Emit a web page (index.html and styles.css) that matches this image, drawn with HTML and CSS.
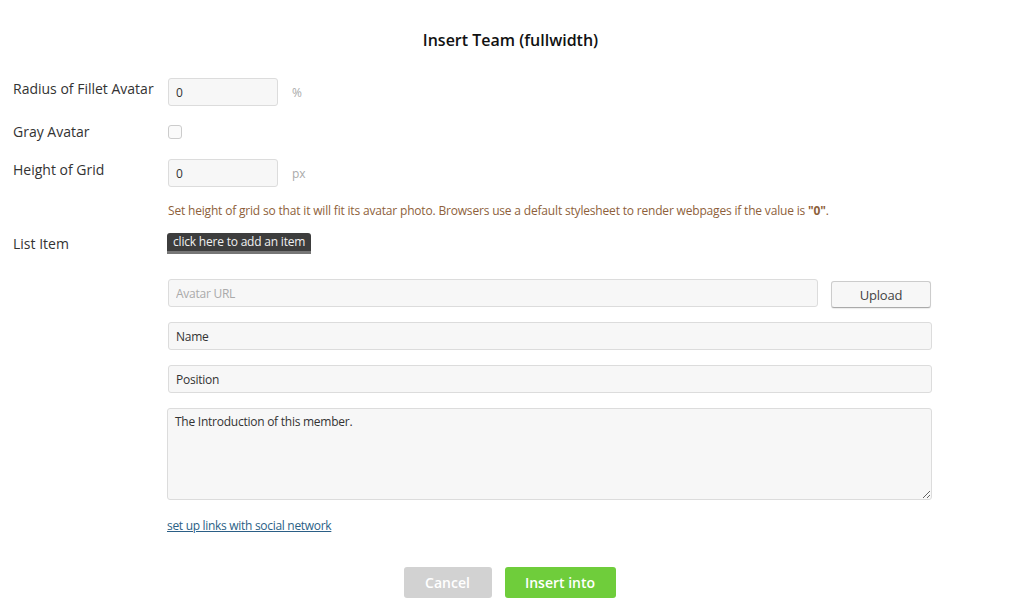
FILE: index.html
```html
<!DOCTYPE html>
<html>
<head>
<meta charset="utf-8">
<link rel="stylesheet" href="styles.css">
</head>
<body>
<div class="dialog">
  <h1 class="title">Insert Team (fullwidth)</h1>
  <div class="form">
    <div class="row row-radius">
      <label class="label">Radius of Fillet Avatar</label>
      <div class="field">
        <div class="inline">
          <input class="input small" type="text" value="0">
          <span class="unit">%</span>
        </div>
      </div>
    </div>
    <div class="row row-gray">
      <label class="label">Gray Avatar</label>
      <div class="field">
        <span class="checkbox"></span>
      </div>
    </div>
    <div class="row row-height">
      <label class="label">Height of Grid</label>
      <div class="field">
        <div class="inline">
          <input class="input small" type="text" value="0">
          <span class="unit">px</span>
        </div>
        <p class="help">Set height of grid so that it will fit its avatar photo. Browsers use a default stylesheet to render webpages if the value is <b>"0"</b>.</p>
      </div>
    </div>
    <div class="row row-list">
      <label class="label">List Item</label>
      <div class="field">
        <button class="add-btn" type="button">click here to add an item</button>
        <div class="item">
          <div class="url-row">
            <input class="input wide" type="text" placeholder="Avatar URL">
            <button class="upload" type="button">Upload</button>
          </div>
          <input class="input full" type="text" value="Name">
          <input class="input full" type="text" value="Position">
          <textarea class="textarea">The Introduction of this member.</textarea>
          <a class="social" href="#">set up links with social network</a>
        </div>
      </div>
    </div>
  </div>
  <div class="actions">
    <button class="btn cancel" type="button">Cancel</button>
    <button class="btn insert" type="button">Insert into</button>
  </div>
</div>
</body>
</html>
```
FILE: styles.css
```css
* { box-sizing: border-box; }
html, body { margin: 0; padding: 0; background: #fff; }
body {
  font-family: "Open Sans", "Liberation Sans", sans-serif;
  color: #333;
  width: 1012px;
  height: 607px;
  overflow: hidden;
}
.dialog { padding: 29px 13px 0 13px; }
.title {
  margin: 0;
  padding-left: 9px;
  text-align: center;
  font-size: 16px;
  font-weight: 600;
  color: #111;
  line-height: 22px;
}
.form { margin-top: 27px; }
.row {
  display: grid;
  grid-template-columns: 154px 1fr;
}
.label {
  font-size: 14px;
  line-height: 20px;
  color: #333;
  padding-top: 1px;
}
.inline { display: flex; align-items: center; }
.input {
  display: block;
  height: 28px;
  border: 1px solid #dcdcdc;
  border-radius: 3px;
  background: #f7f7f7;
  font-family: "Open Sans", "Liberation Sans", sans-serif;
  font-size: 12px;
  letter-spacing: -0.25px;
  color: #333;
  padding: 0 7px;
  outline: none;
}
.input::placeholder { color: #aaa; }
.small { width: 110px; margin-left: 1px; }
.unit { font-size: 12px; color: #aaa; margin-left: 14px; }
.row-gray { margin-top: 15px; }
.checkbox {
  display: block;
  width: 14px;
  height: 14px;
  border: 1px solid #ccc;
  border-radius: 3px;
  background: #fafafa;
  margin: 4px 0 0 1px;
}
.row-height { margin-top: 17px; }
.help {
  margin: 16px 0 0 1px;
  font-size: 12px;
  letter-spacing: -0.18px;
  line-height: 16px;
  color: #8e5f3b;
}
.help b { font-weight: 700; }
.row-list { margin-top: 14px; }
.row-list .label { padding-top: 1px; }
.add-btn {
  display: block;
  height: 21px;
  padding: 0 6px;
  border: 0;
  border-bottom: 3px solid #777;
  border-radius: 3px 3px 0 0;
  background: #3d3d3d;
  color: #f0f0f0;
  font-family: "Open Sans", "Liberation Sans", sans-serif;
  font-size: 12px;
  letter-spacing: -0.2px;
  line-height: 18px;
  cursor: pointer;
}
.item {
  margin-top: 25px;
  width: 765px;
  display: flex;
  flex-direction: column;
  gap: 15px;
}
.url-row { display: flex; align-items: flex-start; gap: 13px; margin-left: 1px; height: 28px; }
.wide { width: 650px; }
.upload {
  width: 100px;
  height: 27px;
  margin-top: 2px;
  border: 1px solid #ccc;
  border-bottom-color: #aaa;
  border-radius: 3px;
  background: #f7f7f7;
  font-family: "Open Sans", "Liberation Sans", sans-serif;
  font-size: 13px;
  letter-spacing: -0.2px;
  color: #444;
  box-shadow: 0 1px 1px rgba(0,0,0,0.08);
}
.full { width: 764px; margin-left: 1px; }
.textarea {
  display: block;
  width: 765px;
  height: 92px;
  border: 1px solid #dcdcdc;
  border-radius: 3px;
  background: #f7f7f7;
  font-family: "Open Sans", "Liberation Sans", sans-serif;
  font-size: 12px;
  letter-spacing: -0.25px;
  line-height: 16px;
  color: #333;
  padding: 5px 7px;
  resize: both;
  outline: none;
}
.social {
  margin-top: 2px;
  font-size: 12px;
  letter-spacing: -0.3px;
  color: #2b5f86;
  text-decoration: underline;
  align-self: flex-start;
}
.actions {
  display: flex;
  justify-content: center;
  gap: 13px;
  margin-top: 33px;
  padding-left: 7px;
}
.btn {
  height: 31px;
  border: 0;
  border-radius: 3px;
  color: #fff;
  font-family: "Open Sans", "Liberation Sans", sans-serif;
  font-size: 14px;
  font-weight: 600;
  cursor: pointer;
}
.cancel { width: 88px; background: #d2d2d2; }
.insert { width: 111px; background: #6fcd3b; }
```
